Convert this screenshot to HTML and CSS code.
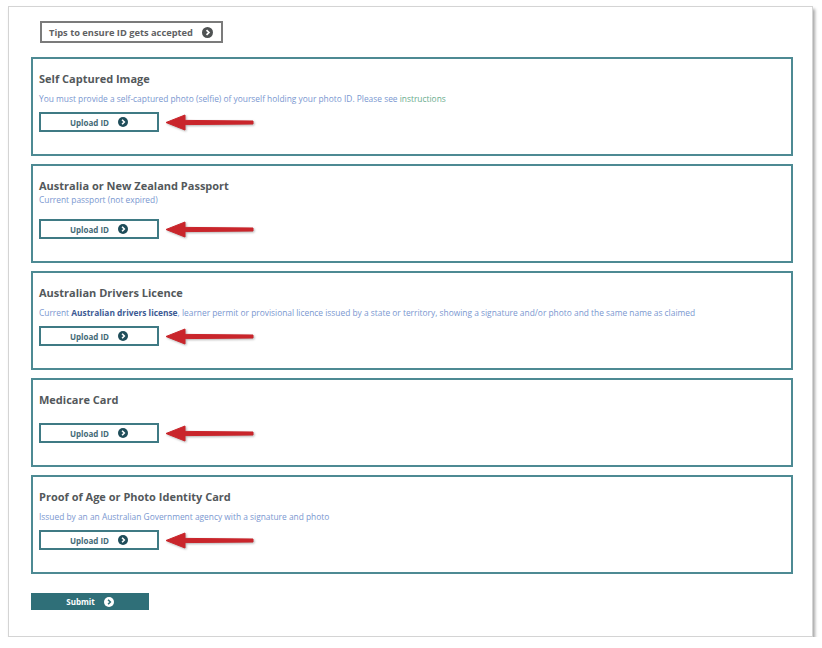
FILE: index.html
```html
<!DOCTYPE html>
<html>

<head>
  <title>Upload ID</title>
  <link rel="stylesheet" href="styles.css">
</head>

<body>
  <div class="frame">
    <button class="tips-button">Tips to ensure ID gets accepted
      <svg class="icon" width="11" height="11" viewBox="0 0 10 10"><circle cx="5" cy="5" r="5" fill="#4f5253"/><path d="M4.1 2.8 L6.3 5 L4.1 7.2" fill="none" stroke="#fff" stroke-width="1.6"/></svg>
    </button>

    <div class="section">
      <div class="title">Self Captured Image</div>
      <div class="desc">You must provide a self-captured photo (selfie) of yourself holding your photo ID. Please see <span class="link">instructions</span></div>
      <div class="row">
        <button class="upload-button">Upload ID
          <svg class="icon" width="10" height="10" viewBox="0 0 10 10"><circle cx="5" cy="5" r="5" fill="#1f4d5a"/><path d="M4.1 2.8 L6.3 5 L4.1 7.2" fill="none" stroke="#fff" stroke-width="1.6"/></svg>
        </button>
        <svg class="arrow" width="96" height="20" viewBox="0 0 96 20"><path d="M24 8.4 L92 9 L92 12 L24 12.6 L24 18 L5 10.5 L24 3 Z" fill="#c9252b" stroke="#c9252b" stroke-width="1" stroke-linejoin="round"/></svg>
      </div>
    </div>

    <div class="section">
      <div class="title">Australia or New Zealand Passport</div>
      <div class="desc desc-tight">Current passport (not expired)</div>
      <div class="row">
        <button class="upload-button">Upload ID
          <svg class="icon" width="10" height="10" viewBox="0 0 10 10"><circle cx="5" cy="5" r="5" fill="#1f4d5a"/><path d="M4.1 2.8 L6.3 5 L4.1 7.2" fill="none" stroke="#fff" stroke-width="1.6"/></svg>
        </button>
        <svg class="arrow" width="96" height="20" viewBox="0 0 96 20"><path d="M24 8.4 L92 9 L92 12 L24 12.6 L24 18 L5 10.5 L24 3 Z" fill="#c9252b" stroke="#c9252b" stroke-width="1" stroke-linejoin="round"/></svg>
      </div>
    </div>

    <div class="section">
      <div class="title">Australian Drivers Licence</div>
      <div class="desc">Current <b class="strong">Australian drivers license</b>, learner permit or provisional licence issued by a state or territory, showing a signature and/or photo and the same name as claimed</div>
      <div class="row">
        <button class="upload-button">Upload ID
          <svg class="icon" width="10" height="10" viewBox="0 0 10 10"><circle cx="5" cy="5" r="5" fill="#1f4d5a"/><path d="M4.1 2.8 L6.3 5 L4.1 7.2" fill="none" stroke="#fff" stroke-width="1.6"/></svg>
        </button>
        <svg class="arrow" width="96" height="20" viewBox="0 0 96 20"><path d="M24 8.4 L92 9 L92 12 L24 12.6 L24 18 L5 10.5 L24 3 Z" fill="#c9252b" stroke="#c9252b" stroke-width="1" stroke-linejoin="round"/></svg>
      </div>
    </div>

    <div class="section">
      <div class="title title-only">Medicare Card</div>
      <div class="row">
        <button class="upload-button">Upload ID
          <svg class="icon" width="10" height="10" viewBox="0 0 10 10"><circle cx="5" cy="5" r="5" fill="#1f4d5a"/><path d="M4.1 2.8 L6.3 5 L4.1 7.2" fill="none" stroke="#fff" stroke-width="1.6"/></svg>
        </button>
        <svg class="arrow" width="96" height="20" viewBox="0 0 96 20"><path d="M24 8.4 L92 9 L92 12 L24 12.6 L24 18 L5 10.5 L24 3 Z" fill="#c9252b" stroke="#c9252b" stroke-width="1" stroke-linejoin="round"/></svg>
      </div>
    </div>

    <div class="section">
      <div class="title">Proof of Age or Photo Identity Card</div>
      <div class="desc">Issued by an an Australian Government agency with a signature and photo</div>
      <div class="row">
        <button class="upload-button">Upload ID
          <svg class="icon" width="10" height="10" viewBox="0 0 10 10"><circle cx="5" cy="5" r="5" fill="#1f4d5a"/><path d="M4.1 2.8 L6.3 5 L4.1 7.2" fill="none" stroke="#fff" stroke-width="1.6"/></svg>
        </button>
        <svg class="arrow" width="96" height="20" viewBox="0 0 96 20"><path d="M24 8.4 L92 9 L92 12 L24 12.6 L24 18 L5 10.5 L24 3 Z" fill="#c9252b" stroke="#c9252b" stroke-width="1" stroke-linejoin="round"/></svg>
      </div>
    </div>

    <button class="submit-button">Submit
      <svg class="icon" width="10" height="10" viewBox="0 0 10 10"><circle cx="5" cy="5" r="5" fill="#fff"/><path d="M4.1 2.8 L6.3 5 L4.1 7.2" fill="none" stroke="#2f6f78" stroke-width="1.6"/></svg>
    </button>
  </div>
</body>

</html>
```

FILE: styles.css
```css
body {
  margin: 0;
  background-color: #ffffff;
  font-family: "Open Sans", "Liberation Sans", sans-serif;
}

.frame {
  width: 762px;
  height: 589px;
  margin: 6px 0 0 8px;
  padding: 14px 19px 26px 22px;
  border: 1px solid #d4d4d4;
  box-shadow: 2px 3px 3px rgba(0, 0, 0, 0.35);
  display: flex;
  flex-direction: column;
  align-items: flex-start;
}

.icon {
  display: block;
  flex-shrink: 0;
}

.tips-button {
  margin: 0 0 14px 9px;
  width: 183px;
  height: 23px;
  padding: 0 8px 0 7px;
  border: 2px solid #7b7b7b;
  background-color: #ffffff;
  color: #5f6264;
  font-family: inherit;
  font-size: 9.3px;
  font-weight: bold;
  display: flex;
  align-items: center;
  justify-content: space-between;
}

.section {
  align-self: stretch;
  padding: 12px 6px 22px 6px;
  margin-bottom: 8px;
  border: 2px solid #4d8a93;
}

.title {
  font-size: 11px;
  line-height: 16px;
  font-weight: bold;
  color: #53585b;
}

.title-only {
  margin-bottom: 15px;
}

.desc {
  margin: 6px 0 7px 0;
  font-size: 8.4px;
  line-height: 12px;
  color: #7a97d0;
  white-space: nowrap;
}

.desc-tight {
  margin: 0 0 13px 0;
}

.link {
  color: #6aac8e;
}

.strong {
  color: #3c5a94;
}

.row {
  display: flex;
  align-items: center;
}

.upload-button {
  width: 120px;
  height: 20px;
  padding: 0;
  border: 2px solid #3f7a84;
  background-color: #ffffff;
  color: #456a77;
  font-family: inherit;
  font-size: 8px;
  font-weight: bold;
  display: flex;
  align-items: center;
  justify-content: center;
  gap: 9px;
}

.arrow {
  margin-left: 2px;
  filter: drop-shadow(1px 1px 1px rgba(0, 0, 0, 0.3));
}

.submit-button {
  margin-top: 11px;
  width: 118px;
  height: 17px;
  padding: 0;
  border: none;
  background-color: #2f6f78;
  color: #ffffff;
  font-family: inherit;
  font-size: 8px;
  font-weight: bold;
  display: flex;
  align-items: center;
  justify-content: center;
  gap: 9px;
}
```
